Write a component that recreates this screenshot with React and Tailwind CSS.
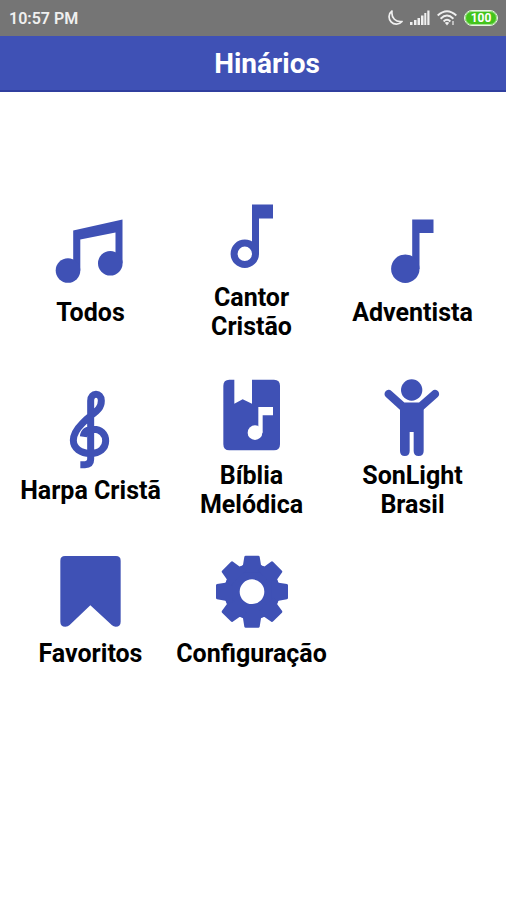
import React from "react";

const iconClass = "block size-[84px] overflow-visible fill-[#3f51b5]";

function DoubleNote() {
  return (
    <svg viewBox="0 0 84 84" className={iconClass} aria-hidden="true">
      <path d="M24.2 16.5 73.5 5.5V49H66.500V18.500L31.3 25.500V56.5H24.2Z" />
      <circle cx="19" cy="56.5" r="12.3" />
      <circle cx="61.3" cy="49.2" r="12.3" />
    </svg>
  );
}

function HollowNote() {
  return (
    <svg viewBox="0 0 84 84" className={iconClass} aria-hidden="true">
      <path d="M42 5.5H63V19.5H49V55H42Z" />
      <circle cx="34.8" cy="54.8" r="10.7" fill="white" stroke="#3f51b5" strokeWidth="7" />
    </svg>
  );
}

function SolidNote() {
  return (
    <svg viewBox="0 0 84 84" className={iconClass} aria-hidden="true">
      <path d="M41.2 5.5H62.5V19H48.5V55H41.2Z" />
      <circle cx="34.3" cy="54.7" r="14.2" />
    </svg>
  );
}

function Clef() {
  return (
    <svg viewBox="116 36 252 252" className={iconClass} aria-hidden="true">
      <path
        d="M210 254H224Q241 254 241 238V62C241 36 273 37 273 62C273 92 248 97 216 130C196 150 189 163 189 181C189 205 211 220 240 220C268 220 286 205 286 183C286 161 270 148 250 148C233 148 221 155 219 170"
        fill="none"
        stroke="#3f51b5"
        strokeWidth="21"
        strokeLinejoin="round"
      />
    </svg>
  );
}

function SongBook() {
  return (
    <svg viewBox="60 20 252 252" className={iconClass} aria-hidden="true">
      <path d="M118 28H133V100L158 87 186 100V28H252Q270 28 270 46V222Q270 240 252 240H118Q100 240 100 222V46Q100 28 118 28Z" />
      <path d="M205 110H249V135H218V187H205Z" fill="white" />
      <circle cx="195" cy="187" r="22" fill="white" />
    </svg>
  );
}

function Child() {
  return (
    <svg viewBox="63 20 252 252" className={iconClass} aria-hidden="true">
      <circle cx="185" cy="59" r="32" />
      <path d="M116 71 158 109H212L255 71" fill="none" stroke="#3f51b5" strokeWidth="25" strokeLinecap="round" strokeLinejoin="round" />
      <path d="M150 98H221V242Q221 257 206 257Q191 257 191 242V185H179V242Q179 257 164.500 257Q150 257 150 242Z" />
    </svg>
  );
}

function Bookmark() {
  return (
    <svg viewBox="72 30 252 252" className={iconClass} aria-hidden="true">
      <path d="M120 33H273Q287 33 287 47V230Q287 245 272 245Q266 245 261 241L196 181 134 240Q129 245 121 245Q106 245 106 230V47Q106 33 120 33Z" />
    </svg>
  );
}

function Gear() {
  return (
    <svg viewBox="120 30 252 252" className={iconClass} aria-hidden="true">
      <circle cx="246" cy="140" r="60" fill="none" stroke="#3f51b5" strokeWidth="46" />
      {[0, 45, 90, 135, 180, 225, 270, 315].map((angle) => (
        <path
          key={angle}
          d="M213 64 219 60 223 35Q224 32 227 32H265Q268 32 269 35L273 60 279 64V82H213Z"
          transform={`rotate(${angle} 246 140)`}
        />
      ))}
    </svg>
  );
}

const items = [
  { label: "Todos", Icon: DoubleNote },
  { label: "Cantor Cristão", Icon: HollowNote },
  { label: "Adventista", Icon: SolidNote },
  { label: "Harpa Cristã", Icon: Clef },
  { label: "Bíblia Melódica", Icon: SongBook },
  { label: "SonLight Brasil", Icon: Child },
  { label: "Favoritos", Icon: Bookmark },
  { label: "Configuração", Icon: Gear },
];

function StatusBar() {
  return (
    <div className="flex h-9 items-center justify-between bg-[#757575] pr-2 pl-[9px] text-[#f0f0f0]">
      <span className="pt-0.5 text-base font-semibold">10:57 PM</span>
      <div className="flex items-center gap-[7px]">
        <svg viewBox="0 0 17 18" className="h-[18px] w-[17px]" fill="none" stroke="currentColor" strokeWidth="1.700" strokeLinejoin="round" aria-hidden="true">
          <path d="M6 2A7.300 7.300 0 1 0 16 12.500C10 13.500 5 9 6 2Z" />
        </svg>
        <svg viewBox="0 0 20 16" className="h-4 w-5" fill="currentColor" aria-hidden="true">
          <path d="M0 12h2.500v3H0zM4 10h2.500v5H4zM7.500 8H10v7H7.500zM11 5.500h2.500V15H11zM14.300 3h2v12h-2zM17.300 0.500h2.200V15h-2.200z" />
        </svg>
        <svg viewBox="0 0 20 16" className="h-4 w-5" fill="none" stroke="currentColor" strokeWidth="1.900" aria-hidden="true">
          <path d="M0.700 5.500Q10-3 19.300 5.500M3.600 8.700Q10 2.500 16.400 8.700M6.600 11.500Q10 8 13.400 11.500" />
          <path d="M7.800 12.800Q10 11 12.200 12.800L10 15.500Z" fill="currentColor" stroke="none" />
          <path d="M16 11v4" strokeWidth="1.200" />
        </svg>
        <span className="flex h-4 w-[34px] items-center justify-center rounded-full border border-[#e8f5e4] bg-[#43c41c] text-xs font-bold text-white outline-1 -outline-offset-2 outline-[#a9e398]">
          100
        </span>
      </div>
    </div>
  );
}

export default function App() {
  return (
    <div className="min-h-screen bg-white font-[Roboto,'Liberation_Sans',sans-serif]">
      <StatusBar />
      <header className="flex h-14 items-center justify-center border-b-2 border-[#303f9f] bg-[#3f51b5] pt-0.5 pl-7">
        <h1 className="text-[28px] font-bold text-white">Hinários</h1>
      </header>
      <main className="grid grid-cols-3 items-center gap-y-9 pt-[107px] pr-[13px] pl-[10px]">
        {items.map(({ label, Icon }) => (
          <button key={label} type="button" className="flex flex-col items-center px-0.5 text-[25px] leading-[29px] font-bold text-black">
            <Icon />
            <span>{label}</span>
          </button>
        ))}
      </main>
    </div>
  );
}
